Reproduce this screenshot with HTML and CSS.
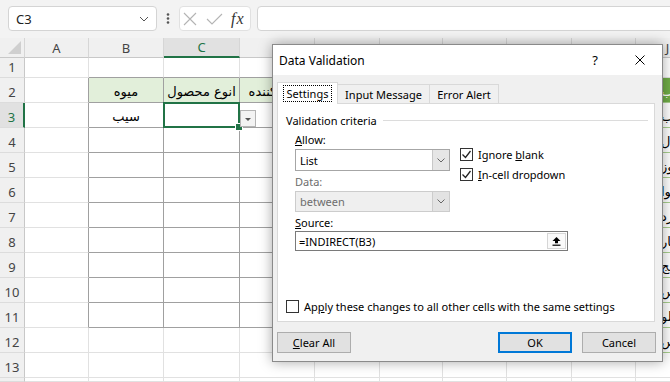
FILE: index.html
```html
<!DOCTYPE html>
<html lang="fa">
<head>
  <meta charset="UTF-8">
  <title>Data Validation</title>
  <link rel="stylesheet" href="styles.css">
</head>
<body>
  <div class="barra">
    <div class="namebox">
      <span>C3</span>
      <svg width="10" height="6" viewBox="0 0 10 6"><path d="M1 1l4 4 4-4" fill="none" stroke="#555" stroke-width="1"/></svg>
    </div>
    <svg class="grip" width="4" height="11" viewBox="0 0 4 11"><circle cx="2" cy="1.5" r="1.3"/><circle cx="2" cy="5.5" r="1.3"/><circle cx="2" cy="9.5" r="1.3"/></svg>
    <div class="fxbox">
      <svg width="14" height="14" viewBox="0 0 14 14"><path d="M1 1l12 12M13 1L1 13" stroke="#b4b4b4" stroke-width="1.1"/></svg>
      <svg width="17" height="12" viewBox="0 0 17 12"><path d="M1 6l5 5L16 1" fill="none" stroke="#b4b4b4" stroke-width="1.1"/></svg>
      <span class="fx">fx</span>
    </div>
    <div class="formula"></div>
  </div>

  <div class="sheet" id="sheet"></div>

  <div class="dialog">
    <div class="dlg-title">
      <span class="dlg-name">Data Validation</span>
      <span class="help">?</span>
      <svg width="10" height="10" viewBox="0 0 10 10"><path d="M0.5 0.5l9 9M9.5 0.5l-9 9" stroke="#000" stroke-width="1"/></svg>
    </div>
    <div class="dlg-body">
      <div class="tabs">
        <div class="tab active"><span class="focus">Settings</span></div>
        <div class="tab t-input">Input Message</div>
        <div class="tab t-error">Error Alert</div>
      </div>
      <div class="panel">
        <div class="legend"><span>Validation criteria</span><i></i></div>
        <div class="criteria">
          <div class="campos">
            <div class="rotulo lb-allow"><u>A</u>llow:</div>
            <div class="select sel-list"><span>List</span><b><svg width="8" height="5" viewBox="0 0 8 5"><path d="M0.5 0.5l3.5 3.5 3.5-3.5" fill="none" stroke="#666" stroke-width="1"/></svg></b></div>
            <div class="rotulo off">Data:</div>
            <div class="select off"><span>between</span><b><svg width="8" height="5" viewBox="0 0 8 5"><path d="M0.5 0.5l3.5 3.5 3.5-3.5" fill="none" stroke="#666" stroke-width="1"/></svg></b></div>
          </div>
          <div class="checks">
            <div class="check"><span class="box"><svg width="11" height="11" viewBox="0 0 11 11"><path d="M1.5 5.5l3 3 5-6.5" fill="none" stroke="#222" stroke-width="1.3"/></svg></span><span>Ignore <u>b</u>lank</span></div>
            <div class="check"><span class="box"><svg width="11" height="11" viewBox="0 0 11 11"><path d="M1.5 5.5l3 3 5-6.5" fill="none" stroke="#222" stroke-width="1.3"/></svg></span><span><u>I</u>n-cell dropdown</span></div>
          </div>
        </div>
        <div class="rotulo lb-source"><u>S</u>ource:</div>
        <div class="source">
          <span>=INDIRECT(B3)</span>
          <b><svg width="9" height="9" viewBox="0 0 9 9"><polygon points="4.5,0 0.5,4 3,4 3,6.3 6,6.3 6,4 8.5,4" fill="#000"/><rect x="0.5" y="7.6" width="8" height="1.2" fill="#000"/></svg></b>
        </div>
        <div class="check apply"><span class="box"></span><span>Ap<u>p</u>ly these changes to all other cells with the same settings</span></div>
      </div>
      <div class="botoes">
        <button><u>C</u>lear All</button>
        <button class="ok">OK</button>
        <button>Cancel</button>
      </div>
    </div>
  </div>

  <script>
    const colunas = ['A', 'B', 'C', 'D', 'E', 'F', 'G', 'H', 'I', 'J'];
    const textos = { B2: 'میوه', C2: 'انوع محصول', D2: 'تولید کننده', B3: 'سیب' };
    const lista = ['سیب', 'سیب', 'پرتقال', 'موز', 'حلوا', 'زرد', 'انار', 'ترنج', 'گیلاس', 'هلو', 'گیلاس'];

    let html = '<div class="h corner"><svg width="13" height="13" viewBox="0 0 13 13"><polygon points="13,0 13,13 0,13" fill="#cfcfcf"/></svg></div>';
    colunas.forEach(c => { html += `<div class="h col${c === 'C' ? ' on' : ''}">${c}</div>`; });

    for (let r = 1; r <= 14; r++) {
      html += `<div class="h num${r === 3 ? ' on' : ''}">${r < 14 ? r : ''}</div>`;
      colunas.forEach(c => {
        const cls = ['c'];
        const meio = 'BCD'.includes(c);
        if (meio && r >= 2 && r <= 11) cls.push('bx');
        if (meio && r === 1) cls.push('bb');
        if (c === 'A' && r >= 2 && r <= 11) cls.push('br');
        if (meio && r === 2) cls.push('hd');
        let txt = textos[c + r] || '';
        if (c === 'J' && r >= 2 && r <= 12) { cls.push(r === 2 ? 'tb th' : 'tb'); txt = lista[r - 2]; }
        let extra = '';
        if (c === 'C' && r === 3) { cls.push('sel'); extra = '<span class="dd"></span>'; }
        html += `<div class="${cls.join(' ')}">${txt ? `<span dir="rtl">${txt}</span>` : ''}${extra}</div>`;
      });
    }
    document.getElementById('sheet').innerHTML = html;
  </script>
</body>
</html>
```

FILE: styles.css
```css
/* Planilha + caixa de validação */
* { box-sizing: border-box; margin: 0; padding: 0; }
body { width: 670px; height: 382px; overflow: hidden; position: relative; background: #fff; font-family: "Noto Sans", sans-serif; }

/* barra de fórmulas */
.barra { height: 38px; background: #f3f3f3; display: flex; align-items: flex-start; padding: 6px 0 0 8px; }
.namebox { width: 149px; height: 25px; background: #fff; border: 1px solid #d4d4d4; border-radius: 4px; display: flex; align-items: center; justify-content: space-between; padding: 0 7px 0 7px; font-size: 13px; color: #222; }
.grip { margin: 7px 9px 0 9px; fill: #555; }
.fxbox { width: 72px; height: 25px; background: #fff; border: 1px solid #e1e1e1; border-radius: 4px; display: flex; align-items: center; gap: 9px; padding-left: 3px; }
.fx { font: italic 16px "Liberation Serif", serif; color: #333; margin-left: -1px; letter-spacing: 1px; }
.formula { flex: 1; height: 25px; margin-left: 6px; margin-right: -10px; background: #fff; border: 1px solid #d4d4d4; border-radius: 4px; }

/* grade */
.sheet { display: grid; grid-template-columns: 25px 64px 75px 76px 75px 65px 63px 64px 65px 64px 64px; grid-template-rows: 20px 20px repeat(12, 25px) 4px; overflow: hidden; }
.h { background: #f0f0f0; color: #444; font-size: 13px; display: flex; align-items: center; justify-content: center; border-right: 1px solid #d6d6d6; border-bottom: 1px solid #c8c8c8; }
.corner { justify-content: flex-end; align-items: flex-end; padding: 0 3px 3px 0; }
.num { align-items: flex-end; padding-bottom: 1px; border-right-color: #c8c8c8; border-bottom-color: #dcdcdc; }
.col.on { background: #e1e1e1; color: #217346; border-bottom: 2px solid #217346; }
.num.on { background: #e1e1e1; color: #217346; border-right: 2px solid #217346; }
.c { border-right: 1px solid #e1e1e1; border-bottom: 1px solid #e1e1e1; display: flex; align-items: center; justify-content: center; font: 13px "DejaVu Sans", sans-serif; white-space: nowrap; color: #000; padding-top: 2px; }
.bx { border-color: #a0a0a0; }
.bb { border-bottom-color: #a0a0a0; }
.br { border-right-color: #a0a0a0; }
.hd { background: #e2efda; }
.tb { justify-content: flex-start; padding-left: 25px; overflow: hidden; border-bottom-color: #a9d08e; }
.th { background: #70ad47; color: #fff; }
.sel { position: relative; }
.sel::after { content: ''; position: absolute; left: -1px; top: -1px; right: -1px; bottom: -1px; border: 2px solid #217346; }
.sel::before { content: ''; position: absolute; right: -4px; bottom: -4px; width: 6px; height: 6px; background: #217346; border: 1px solid #fff; z-index: 2; }
.dd { position: absolute; left: calc(100% + 1px); top: 7px; width: 16px; height: 17px; background: #f3f3f3; border: 1px solid #b4b4b4; z-index: 2; }
.dd::after { content: ''; position: absolute; left: 4px; top: 7px; border-left: 3px solid transparent; border-right: 3px solid transparent; border-top: 3px solid #555; }

/* caixa de diálogo */
.dialog { position: absolute; left: 272px; top: 44px; width: 391px; height: 318px; background: #f0f0f0; border: 1px solid #8a8a8a; box-shadow: 0 0 12px rgba(0,0,0,0.35); font-size: 11px; color: #000; }
.dlg-title { height: 30px; background: #fff; display: flex; align-items: center; padding: 0 17px 0 6px; font-size: 12px; }
.dlg-name { flex: 1; }
.help { width: 20px; text-align: center; margin-right: 30px; font-size: 13px; }
.dlg-body { padding: 7px 0 0 4px; }
.tabs { display: flex; align-items: flex-start; height: 22px; margin-bottom: -1px; position: relative; z-index: 1; }
.tab { height: 19px; margin-top: 2px; border: 1px solid #d9d9d9; border-left: none; border-bottom: none; display: flex; align-items: center; justify-content: center; }
.tab.active { height: 22px; margin-top: 0; width: 61px; background: #fff; border-left: 1px solid #d9d9d9; }
.t-input { width: 92px; }
.t-error { width: 69px; }
.focus { outline: 1px dotted #000; padding: 0 3px; line-height: 15px; }
.panel { width: 378px; height: 219px; background: #fff; border: 1px solid #d9d9d9; padding: 8px 6px 0 8px; }
.legend { display: flex; align-items: center; height: 16px; }
.legend i { flex: 1; height: 1px; background: #dcdcdc; margin-left: 6px; }
.criteria { display: flex; margin-left: 9px; }
.campos { width: 155px; }
.rotulo { height: 16px; line-height: 16px; margin-top: 3px; }
.lb-allow { margin-top: 4px; }
.rotulo.off { color: #6d6d6d; }
.select { height: 22px; margin-top: 1px; border: 1px solid #a6a6a6; display: flex; align-items: center; background: #fff; }
.select span { flex: 1; padding-left: 4px; }
.select b { width: 17px; height: 100%; background: #e6e6e6; border-left: 1px solid #c8c8c8; display: flex; align-items: center; justify-content: center; }
.select.off { height: 21px; background: #efefef; border-color: #cccccc; color: #6d6d6d; }
.select.off b { background: #e3e3e3; border-left-color: #cccccc; }
.checks { margin: 16px 0 0 10px; }
.check { height: 20px; display: flex; align-items: center; gap: 5px; }
.box { width: 13px; height: 13px; border: 1px solid #333; background: #fff; display: flex; align-items: center; justify-content: center; }
.lb-source { margin-left: 9px; }
.source { width: 273px; height: 20px; margin-left: 9px; border: 1px solid #7a7a7a; display: flex; align-items: center; padding-left: 3px; }
.source span { flex: 1; }
.source b { width: 19px; height: 16px; margin-right: 1px; border: 1px solid #d6d6d6; background: #fafafa; display: flex; align-items: center; justify-content: center; }
.apply { margin-top: 45px; }
.botoes { display: flex; gap: 10px; width: 379px; margin-top: 10px; }
.botoes button { width: 74px; height: 21px; background: #e1e1e1; border: 1px solid #adadad; font: 11px "Noto Sans", sans-serif; color: #000; }
.botoes .ok { margin-left: auto; border: 2px solid #0078d7; }
```
